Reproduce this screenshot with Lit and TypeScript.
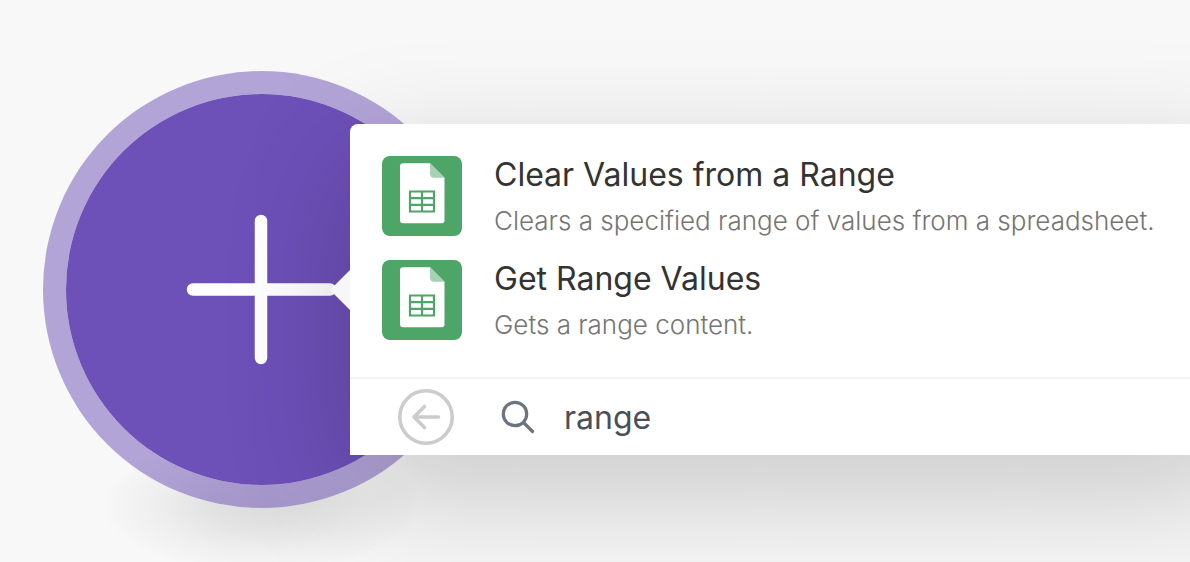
import { LitElement, html, css, svg } from "lit";
import { customElement, property, state } from "lit/decorators.js";

interface Action {
  title: string;
  description: string;
}

const ACTIONS: Action[] = [
  {
    title: "Clear Values from a Range",
    description: "Clears a specified range of values from a spreadsheet.",
  },
  { title: "Get Range Values", description: "Gets a range content." },
];

const sheetIcon = svg`
  <rect width="80" height="80" rx="8" fill="#4da568" />
  <path d="M21 7.300H48L62.500 21.800V64.300Q62.500 67.300 59.500 67.300H21Q18 67.300 18 64.300V10.300Q18 7.300 21 7.300Z" fill="#fff" />
  <path d="M48 7.300L62.500 21.800H52Q48 21.800 48 17.800Z" fill="#a6d2b3" />
  <path fill="none" stroke="#4da568" stroke-width="2.200"
    d="M28 35.500H52V55.500H28ZM28 42.200H52M28 48.800H52M40 35.500V55.500" />
`;

@customElement("module-node")
class ModuleNode extends LitElement {
  static styles = css`
    :host {
      display: block;
      position: relative;
      width: 437px;
    }
    .shadow {
      position: absolute;
      left: 58px;
      top: 366px;
      width: 320px;
      height: 136px;
      background: radial-gradient(
        closest-side,
        rgba(0, 0, 0, 0.11) 0%,
        rgba(0, 0, 0, 0.09) 30%,
        rgba(0, 0, 0, 0.04) 66%,
        rgba(0, 0, 0, 0.01) 92%,
        transparent 100%
      );
    }
    .add {
      position: relative;
      display: block;
      box-sizing: border-box;
      width: 100%;
      aspect-ratio: 1;
      padding: 0;
      border: 23px solid rgba(109, 80, 184, 0.5);
      border-radius: 50%;
      background: #6d50b8 padding-box;
      cursor: pointer;
    }
    .plus {
      display: block;
      width: 100%;
      height: 100%;
    }
  `;

  render() {
    return html`
      <div class="shadow"></div>
      <button class="add" type="button" aria-label="Add module">
        <svg class="plus" viewBox="0 0 391 391" aria-hidden="true">
          <path d="M195 127V264M127 195.500H264" fill="none" stroke="#fff" stroke-width="12.500" stroke-linecap="round" />
        </svg>
      </button>
    `;
  }
}

@customElement("action-item")
class ActionItem extends LitElement {
  @property({ attribute: false }) action!: Action;

  static styles = css`
    :host {
      display: block;
    }
    .row {
      display: flex;
      align-items: center;
      gap: 32px;
      width: 100%;
      height: 80px;
      padding: 0;
      border: 0;
      background: none;
      font: inherit;
      text-align: left;
      cursor: pointer;
    }
    .icon {
      flex: none;
      width: 80px;
      height: 80px;
    }
    .text {
      display: flex;
      flex-direction: column;
      gap: 8px;
      padding-top: 2px;
      white-space: nowrap;
    }
    .title {
      font-size: 32px;
      line-height: 40px;
      color: #333;
    }
    .description {
      font-size: 26px;
      font-weight: 300;
      line-height: 36px;
      color: #757575;
    }
  `;

  render() {
    return html`
      <button class="row" type="button">
        <svg class="icon" viewBox="0 0 80 80" aria-hidden="true">${sheetIcon}</svg>
        <span class="text">
          <span class="title">${this.action.title}</span>
          <span class="description">${this.action.description}</span>
        </span>
      </button>
    `;
  }
}

@customElement("action-picker")
class ActionPicker extends LitElement {
  @state() private query = "range";

  static styles = css`
    :host {
      display: block;
      position: relative;
      background: #fff;
      border-radius: 8px 8px 0 0;
      box-shadow: 0 40px 128px rgba(0, 0, 0, 0.2);
    }
    .arrow {
      position: absolute;
      right: 100%;
      top: 146px;
      width: 20px;
      height: 40px;
      background: #f7f7f7;
      clip-path: polygon(100% 0, 100% 100%, 0 50%);
    }
    .list {
      display: flex;
      flex-direction: column;
      gap: 24px;
      margin: 0;
      padding: 32px 32px 37px;
      list-style: none;
    }
    .search {
      display: flex;
      align-items: center;
      height: 76px;
      padding: 0 48px;
      border-top: 2px solid #f3f3f3;
    }
    .back {
      flex: none;
      width: 56px;
      height: 56px;
      padding: 0;
      border: 0;
      background: none;
      cursor: pointer;
    }
    .glyph {
      display: block;
    }
    .field {
      display: flex;
      flex: 1;
      align-items: center;
      gap: 28px;
      padding-left: 46px;
    }
    .input {
      flex: 1;
      min-width: 0;
      padding: 2px 0 0;
      border: 0;
      outline: 0;
      background: none;
      font: inherit;
      font-size: 32px;
      line-height: 40px;
      color: #495057;
    }
  `;

  render() {
    return html`
      <div class="arrow"></div>
      <ul class="list">
        ${ACTIONS.map((a) => html`<li><action-item .action=${a}></action-item></li>`)}
      </ul>
      <div class="search">
        <button class="back" type="button" aria-label="Back">
          <svg class="glyph" width="56" height="56" viewBox="0 0 56 56" fill="none" stroke="#ccc" aria-hidden="true">
            <circle cx="28" cy="28" r="26.200" stroke-width="3.600" />
            <path d="M40.500 28H16.500M26.500 17.500L16 28L26.500 38.500" stroke-width="3.600" stroke-linecap="round" stroke-linejoin="round" />
          </svg>
        </button>
        <label class="field">
          <svg class="glyph" width="36" height="36" viewBox="0 0 36 36" fill="none" stroke="#6c757d" stroke-width="3.200" aria-hidden="true">
            <circle cx="15" cy="15" r="11.700" />
            <path d="M23.500 23.500L32.500 32.500" stroke-linecap="round" />
          </svg>
          <input
            class="input"
            type="text"
            aria-label="Search"
            .value=${this.query}
            @input=${(e: Event) => (this.query = (e.target as HTMLInputElement).value)}
          />
        </label>
      </div>
    `;
  }
}

@customElement("app-root")
class AppRoot extends LitElement {
  static styles = css`
    :host {
      display: block;
      position: relative;
      box-sizing: border-box;
      min-height: 100vh;
      overflow: hidden;
      padding: 71px 0 0 43px;
      background: #f8f8f8;
      font-family: Inter, "Liberation Sans", sans-serif;
    }
    .picker {
      position: absolute;
      left: 350px;
      right: -60px;
      top: 124px;
    }
  `;

  render() {
    return html`
      <module-node></module-node>
      <action-picker class="picker"></action-picker>
    `;
  }
}
